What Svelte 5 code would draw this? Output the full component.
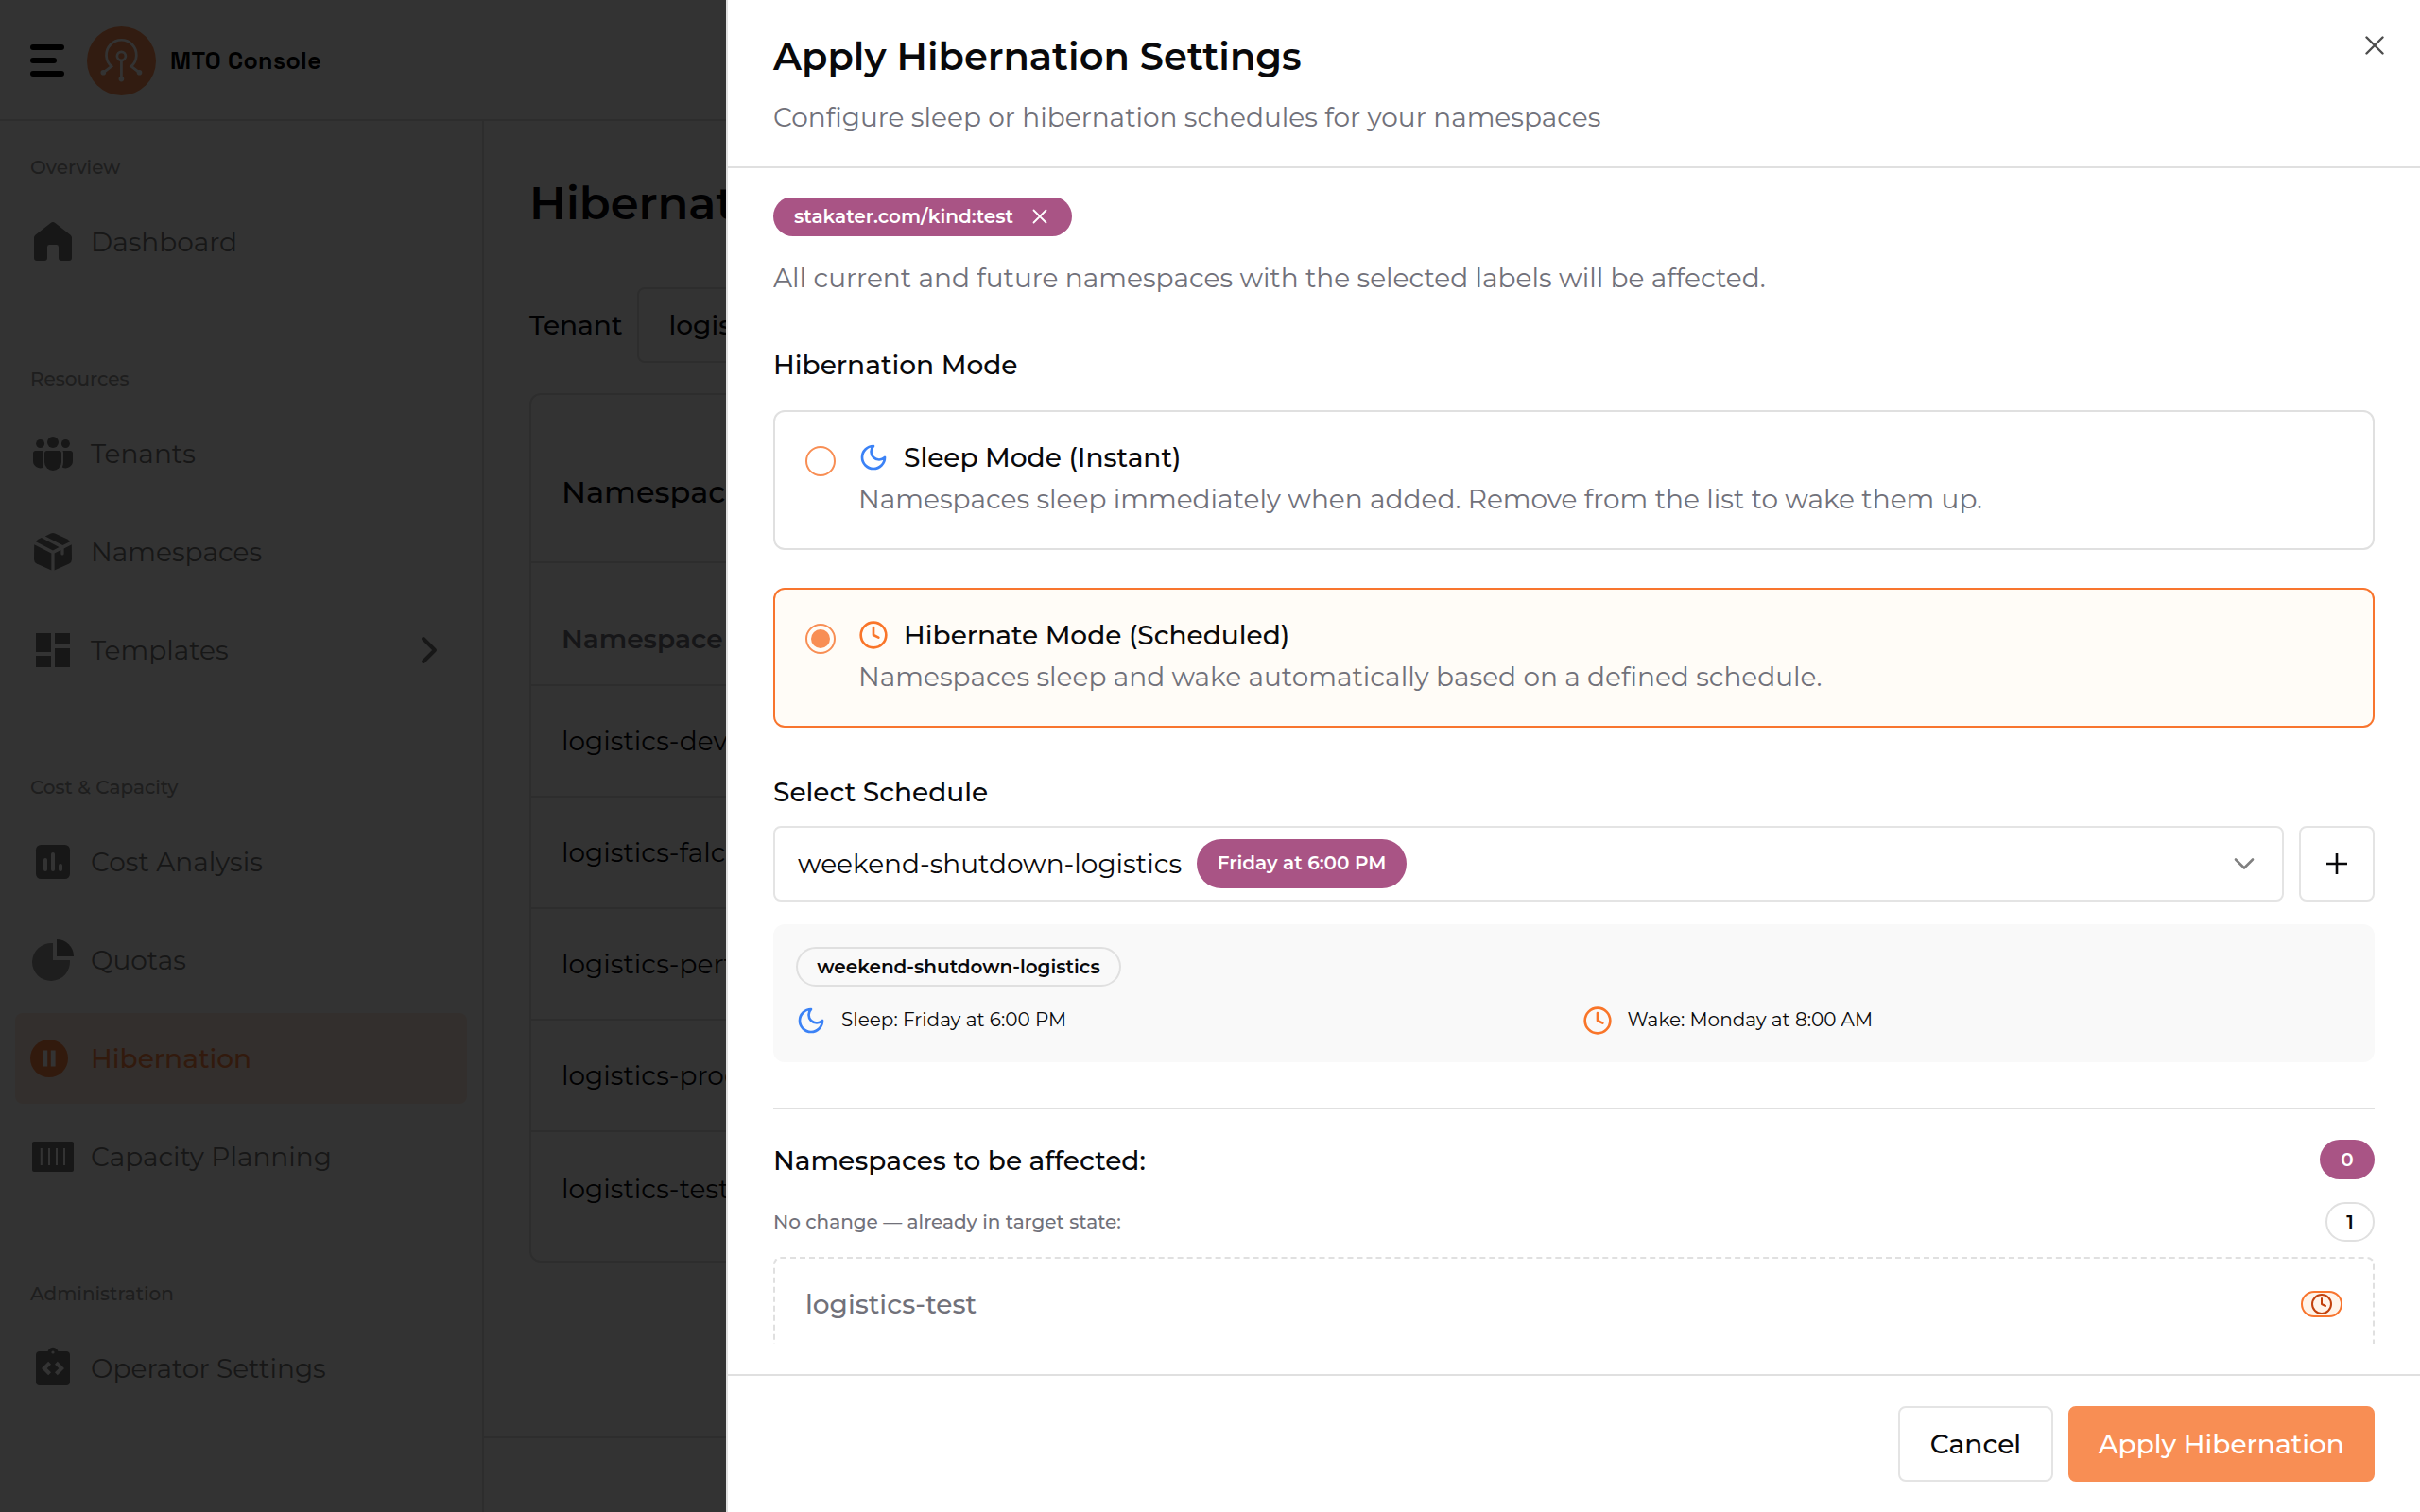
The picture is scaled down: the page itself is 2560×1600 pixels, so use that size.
<script lang="ts">
	type NavItem = { label: string; icon: string; active?: boolean; expandable?: boolean };

	const sections: { title: string; items: NavItem[] }[] = [
		{ title: 'Overview', items: [{ label: 'Dashboard', icon: 'home' }] },
		{
			title: 'Resources',
			items: [
				{ label: 'Tenants', icon: 'people' },
				{ label: 'Namespaces', icon: 'box' },
				{ label: 'Templates', icon: 'grid', expandable: true }
			]
		},
		{
			title: 'Cost & Capacity',
			items: [
				{ label: 'Cost Analysis', icon: 'chart' },
				{ label: 'Quotas', icon: 'pie' },
				{ label: 'Hibernation', icon: 'pause', active: true },
				{ label: 'Capacity Planning', icon: 'capacity' }
			]
		},
		{
			title: 'Administration',
			items: [{ label: 'Operator Settings', icon: 'operator' }]
		}
	];

	const namespaces = ['logistics-dev', 'logistics-falcon', 'logistics-perf', 'logistics-prod', 'logistics-test'];

	let mode = $state('hibernate');
</script>

{#snippet moon()}
	<svg class="mode-icon moon" viewBox="0 0 24 24">
		<path d="M12 3a6 6 0 0 0 9 9 9 9 0 1 1-9-9Z" />
	</svg>
{/snippet}

{#snippet clock()}
	<svg class="mode-icon clock" viewBox="0 0 24 24">
		<circle cx="12" cy="12" r="10" />
		<path d="M12 6v6l4 2" />
	</svg>
{/snippet}

<div class="app">
	<header class="topbar">
		<div class="hamburger"><i></i><i class="short"></i><i></i></div>
		<svg class="logo" viewBox="0 0 73 73">
			<circle cx="36.5" cy="36.5" r="36.5" fill="#f88e54" />
			<g fill="none" stroke="#fff" stroke-width="2.7">
				<path d="M17.3 48.8 26 42.2A15.9 15.9 0 1 1 46.8 42.2L55.5 48.8" />
				<circle cx="36.4" cy="31.3" r="4.5" />
				<path d="M36.4 35.8V55" />
			</g>
			<g fill="#fff">
				<circle cx="17.3" cy="48.8" r="2.8" />
				<circle cx="55.5" cy="48.8" r="2.8" />
				<circle cx="36.4" cy="55.6" r="2.8" />
			</g>
		</svg>
		<span class="brand">MTO Console</span>
	</header>

	<div class="body">
		<nav class="sidebar">
			{#each sections as section}
				<div class="section">
					<div class="section-title">{section.title}</div>
					{#each section.items as item}
						<div class="nav-item" class:active={item.active}>
							<span class="nav-icon">
								{#if item.icon === 'home'}
									<svg viewBox="0 0 24 24"><path d="M10.8 2a2 2 0 0 1 2.4 0l8 6.2c.5.4.8 1 .8 1.6v10.7a1.5 1.5 0 0 1-1.5 1.5h-4a1.5 1.5 0 0 1-1.5-1.5v-5.8a1.2 1.2 0 0 0-1.2-1.2h-3.6A1.2 1.2 0 0 0 9 14.7v5.8A1.5 1.5 0 0 1 7.5 22h-4A1.5 1.5 0 0 1 2 20.5V9.8c0-.6.3-1.2.8-1.6z" /></svg>
								{:else if item.icon === 'people'}
									<svg viewBox="0 0 24 24">
										<circle cx="12" cy="6" r="3" />
										<circle cx="5.3" cy="6.75" r="2.25" />
										<circle cx="18.7" cy="6.75" r="2.25" />
										<path d="M7.5 11.75c0-.7.55-1.25 1.25-1.25h6.5c.7 0 1.25.55 1.25 1.25v4.75a4.5 4.5 0 0 1-9 0z" />
										<path d="M6.8 10.5a2.2 2.2 0 0 0-.3 1.25v4.75c0 1 .2 1.9.6 2.7a3.75 3.75 0 0 1-5.6-3.3v-4.15c0-.7.55-1.25 1.25-1.25z" />
										<path d="M17.2 10.5a2.2 2.2 0 0 1 .3 1.25v4.75c0 1-.2 1.9-.6 2.7a3.75 3.75 0 0 0 5.6-3.3v-4.15c0-.7-.55-1.25-1.25-1.25z" />
									</svg>
								{:else if item.icon === 'box'}
									<svg viewBox="0 0 24 24">
										<path d="M2.1 8.1 11.2 12.7v9.1L3.4 18.2A2.5 2.5 0 0 1 2 16z" />
										<path d="M12.8 12.7 16.2 11v2a.8.8 0 0 0 1.6 0v-2.8l4.1-2.1.1 7.9a2.5 2.5 0 0 1-1.4 2.2l-7.8 3.6z" />
										<path d="M3 6.6q.5-.9 1.4-1.4l1.5-.7 9.4 5L12 11.2z" />
										<path d="m7.9 3.7 3-1.4a2.7 2.7 0 0 1 2.2 0l6.5 2.9q.9.5 1.4 1.4l-3.8 1.9z" />
									</svg>
								{:else if item.icon === 'grid'}
									<svg viewBox="0 0 24 24"><path d="M3 13h8V3H3v10zm0 8h8v-6H3v6zm10 0h8V11h-8v10zm0-18v6h8V3h-8z" /></svg>
								{:else if item.icon === 'chart'}
									<svg viewBox="0 0 24 24">
										<rect x="3" y="3" width="18" height="18" rx="2.6" />
										<g class="cut">
											<rect x="7" y="10" width="2" height="7" rx="1" />
											<rect x="11" y="7" width="2" height="10" rx="1" />
											<rect x="15" y="13" width="2" height="4" rx="1" />
										</g>
									</svg>
								{:else if item.icon === 'pie'}
									<svg viewBox="0 0 24 24">
										<path opacity="0.75" d="M12 3.05V12h8.95A10 10 0 1 1 12 3.05z" />
										<path d="M14 1a9 9 0 0 1 9 9h-9z" />
									</svg>
								{:else if item.icon === 'pause'}
									<svg class="pause" viewBox="0 0 20 20">
										<circle cx="10" cy="10" r="10" />
										<path class="cut" d="M6.7 5.8h2.4v8.4H6.7zM10.9 5.8h2.4v8.4h-2.4z" />
									</svg>
								{:else if item.icon === 'capacity'}
									<svg viewBox="0 0 24 24">
										<rect x="1" y="4" width="22" height="16" rx="1" />
										<path class="cut" d="M5.4 7.5h1v9h-1zM9.5 7.5h1v9h-1zM13.5 7.5h1v9h-1zM17.5 7.5h1v9h-1z" />
									</svg>
								{:else}
									<svg viewBox="0 0 24 24">
										<rect x="3" y="3" width="18" height="18" rx="2" />
										<circle cx="12" cy="3.7" r="2.8" />
										<g class="cut">
											<circle cx="12" cy="3.5" r="0.8" />
											<path d="M11 14.17l-1.41 1.42L6 12l3.59-3.59L11 9.83 8.83 12 11 14.17zm3.41 1.42L13 14.17 15.17 12 13 9.83l1.41-1.42L18 12l-3.59 3.59z" />
										</g>
									</svg>
								{/if}
							</span>
							<span class="nav-label">{item.label}</span>
							{#if item.expandable}
								<svg class="expand" viewBox="0 0 20 32"><path d="M3 4l12 12L3 28" /></svg>
							{/if}
						</div>
					{/each}
				</div>
			{/each}
		</nav>

		<main class="content">
			<div class="page">
				<h1>Hibernation</h1>
				<div class="tenant-row">
					<span class="tenant-label">Tenant</span>
					<div class="tenant-select">logistics</div>
				</div>
				<div class="table-card">
					<div class="table-title">Namespaces</div>
					<div class="table-head">Namespace</div>
					{#each namespaces as name}
						<div class="table-row">{name}</div>
					{/each}
				</div>
			</div>
			<div class="page-footer"></div>
		</main>
	</div>
</div>

<div class="overlay"></div>

<aside class="drawer">
	<div class="drawer-header">
		<div>
			<h2>Apply Hibernation Settings</h2>
			<p class="subtitle">Configure sleep or hibernation schedules for your namespaces</p>
		</div>
		<svg class="close" viewBox="0 0 20 20"><path d="M1.5 1.5l17 17M18.5 1.5l-17 17" /></svg>
	</div>

	<div class="drawer-body">
		<div class="badge chip">
			<span>stakater.com/kind:test</span>
			<svg viewBox="0 0 16 16"><path d="M1.5 1.5l13 13M14.5 1.5l-13 13" /></svg>
		</div>
		<p class="hint">All current and future namespaces with the selected labels will be affected.</p>

		<h3 class="mode-heading">Hibernation Mode</h3>
		<div class="mode-card" class:selected={mode === 'sleep'}>
			<span class="radio"></span>
			<div class="mode-text">
				<div class="mode-title">{@render moon()}<span>Sleep Mode (Instant)</span></div>
				<p>Namespaces sleep immediately when added. Remove from the list to wake them up.</p>
			</div>
		</div>
		<div class="mode-card second" class:selected={mode === 'hibernate'}>
			<span class="radio"></span>
			<div class="mode-text">
				<div class="mode-title">{@render clock()}<span>Hibernate Mode (Scheduled)</span></div>
				<p>Namespaces sleep and wake automatically based on a defined schedule.</p>
			</div>
		</div>

		<h3 class="schedule-heading">Select Schedule</h3>
		<div class="schedule-row">
			<div class="select">
				<span>weekend-shutdown-logistics</span>
				<span class="badge tall">Friday at 6:00 PM</span>
				<svg class="caret" viewBox="0 0 24 14"><path d="M3 2.5l9 9 9-9" /></svg>
			</div>
			<button class="add" aria-label="Add schedule">
				<svg viewBox="0 0 24 24"><path d="M12 1v22M1 12h22" /></svg>
			</button>
		</div>

		<div class="summary">
			<span class="badge outline">weekend-shutdown-logistics</span>
			<div class="times">
				<div class="time">{@render moon()}<span>Sleep: Friday at 6:00 PM</span></div>
				<div class="time">{@render clock()}<span>Wake: Monday at 8:00 AM</span></div>
			</div>
		</div>

		<div class="divider"></div>

		<div class="count-row first">
			<h3>Namespaces to be affected:</h3>
			<span class="badge zero">0</span>
		</div>
		<div class="count-row">
			<span class="no-change">No change — already in target state:</span>
			<span class="badge outline one">1</span>
		</div>
		<div class="target">
			<span>logistics-test</span>
			<span class="clock-pill">{@render clock()}</span>
		</div>
	</div>

	<div class="drawer-footer">
		<button class="btn cancel">Cancel</button>
		<button class="btn primary">Apply Hibernation</button>
	</div>
</aside>

<style>
	:global(body) {
		margin: 0;
		background: #fff;
		overflow: hidden;
	}

	.app,
	.drawer,
	button {
		font-family: Montserrat, Inter, 'Open Sans', sans-serif;
	}

	.app *,
	.drawer,
	.drawer * {
		box-sizing: border-box;
	}

	h1,
	h2,
	h3,
	p {
		margin: 0;
	}

	.app {
		display: flex;
		flex-direction: column;
		width: 2560px;
		height: 1600px;
		font-size: 28px;
		color: #09090b;
	}

	.topbar {
		display: flex;
		align-items: center;
		height: 128px;
		padding: 2px 0 0 32px;
		border-bottom: 2px solid #dedede;
	}

	.hamburger {
		display: flex;
		flex-direction: column;
		gap: 8px;
		width: 36px;
		margin-right: 24px;
	}

	.hamburger i {
		height: 6px;
		border-radius: 3px;
		background: #000;
	}

	.hamburger .short {
		width: 28px;
	}

	.logo {
		width: 73px;
		height: 73px;
		margin-right: 15px;
	}

	.brand {
		font-family: 'Space Grotesk', Inter, sans-serif;
		font-size: 25px;
		font-weight: 700;
		letter-spacing: 0.4px;
		color: #000;
	}

	.body {
		display: flex;
		flex: 1;
		min-height: 0;
	}

	.sidebar {
		width: 512px;
		padding: 18px 16px 0;
		border-right: 2px solid #dedede;
	}

	.section {
		margin-bottom: 66px;
	}

	.section-title {
		height: 62px;
		padding-left: 16px;
		line-height: 62px;
		font-size: 20px;
		font-weight: 500;
		color: #949494;
	}

	.nav-item {
		display: flex;
		align-items: center;
		height: 96px;
		margin-bottom: 8px;
		padding: 0 16px;
		border-radius: 8px;
		color: #737373;
	}

	.nav-item:last-child {
		margin-bottom: 0;
	}

	.nav-item.active {
		background: #ffeadf;
		color: #f88144;
		font-weight: 500;
	}

	.nav-icon {
		display: flex;
		width: 64px;
	}

	.nav-icon svg {
		width: 48px;
		height: 48px;
		fill: currentColor;
	}

	.nav-icon svg.pause {
		width: 40px;
		height: 40px;
	}

	.nav-icon .cut {
		fill: #fff;
	}

	.nav-label {
		flex: 1;
	}

	.expand {
		width: 20px;
		height: 32px;
		margin-right: 13px;
		fill: none;
		stroke: #737373;
		stroke-width: 4;
		stroke-linecap: round;
		stroke-linejoin: round;
	}

	.content {
		display: flex;
		flex: 1;
		flex-direction: column;
	}

	.page {
		flex: 1;
		padding: 56px 48px 0;
	}

	h1 {
		height: 62px;
		margin-bottom: 58px;
		line-height: 62px;
		font-size: 48px;
		font-weight: 600;
	}

	.tenant-row {
		display: flex;
		align-items: center;
		gap: 15px;
		margin-bottom: 32px;
	}

	.tenant-label,
	.tenant-select {
		font-weight: 500;
	}

	.tenant-select {
		width: 400px;
		height: 80px;
		padding-left: 32px;
		border: 2px solid #dedede;
		border-radius: 8px;
		line-height: 76px;
	}

	.table-card {
		height: 920px;
		border: 2px solid #dedede;
		border-radius: 12px;
	}

	.table-title,
	.table-head,
	.table-row {
		display: flex;
		align-items: center;
		padding-left: 32px;
		border-bottom: 2px solid #dedede;
	}

	.table-title {
		height: 178px;
		padding-top: 28px;
		font-size: 32px;
		font-weight: 500;
	}

	.table-head {
		height: 130px;
		padding-top: 31px;
		font-weight: 600;
		color: #71717a;
	}

	.table-row {
		height: 118px;
	}

	.table-row:last-child {
		height: 119px;
		border-bottom: 0;
	}

	.page-footer {
		height: 80px;
		border-top: 2px solid #dedede;
	}

	.overlay {
		position: fixed;
		inset: 0;
		background: rgba(0, 0, 0, 0.8);
	}

	.drawer {
		position: fixed;
		top: 0;
		right: 0;
		display: flex;
		flex-direction: column;
		width: 1792px;
		height: 1600px;
		border-left: 2px solid #e0e0e0;
		background: #fff;
		font-size: 28px;
		color: #09090b;
	}

	.drawer-header {
		display: flex;
		justify-content: space-between;
		height: 178px;
		padding: 32px 38px 0 48px;
		border-bottom: 2px solid #e0e0e0;
	}

	h2 {
		height: 56px;
		margin-bottom: 16px;
		line-height: 55px;
		font-size: 40px;
		font-weight: 600;
	}

	.subtitle {
		height: 40px;
		line-height: 40px;
		color: #71717a;
	}

	.close {
		width: 20px;
		height: 20px;
		margin-top: 6px;
		fill: none;
		stroke: #4d4d4d;
		stroke-width: 2.4;
		stroke-linecap: round;
	}

	.drawer-body {
		height: 1212px;
		margin: 32px 48px;
		overflow: hidden;
	}

	.badge {
		display: inline-flex;
		align-items: center;
		justify-content: center;
		height: 42px;
		border-radius: 26px;
		background: #a95485;
		color: #fff;
		font-size: 20px;
		font-weight: 600;
	}

	.badge.outline {
		border: 2px solid #e0e0e0;
		background: transparent;
		color: #09090b;
	}

	.badge.tall {
		width: 222px;
		height: 52px;
		padding-bottom: 2px;
	}

	.chip {
		display: flex;
		justify-content: flex-start;
		gap: 20px;
		width: 316px;
		margin-top: -2px;
		padding-left: 22px;
	}

	.chip svg {
		width: 16px;
		height: 16px;
		fill: none;
		stroke: #fff;
		stroke-width: 1.8;
		stroke-linecap: round;
	}

	.hint {
		height: 40px;
		margin-top: 24px;
		line-height: 40px;
		color: #71717a;
	}

	h3 {
		height: 40px;
		line-height: 40px;
		font-size: 28px;
		font-weight: 500;
	}

	.mode-heading {
		margin-top: 52px;
	}

	.mode-card {
		display: flex;
		height: 148px;
		margin-top: 28px;
		padding: 28px 32px;
		border: 2px solid #e0e0e0;
		border-radius: 12px;
	}

	.mode-card.second {
		margin-top: 40px;
	}

	.mode-card.selected {
		border-color: #f8752e;
		background: #fffcf7;
	}

	.radio {
		display: flex;
		align-items: center;
		justify-content: center;
		width: 32px;
		height: 32px;
		margin: 8px 24px 0 0;
		border: 2px solid #f88e54;
		border-radius: 50%;
	}

	.selected .radio::after {
		content: '';
		width: 20px;
		height: 20px;
		border-radius: 50%;
		background: #f88e54;
	}

	.mode-title {
		display: flex;
		align-items: center;
		gap: 16px;
		height: 40px;
		font-weight: 500;
	}

	.mode-text p {
		height: 40px;
		margin-top: 4px;
		line-height: 40px;
		color: #71717a;
	}

	.mode-icon {
		width: 32px;
		height: 32px;
		fill: none;
		stroke-width: 2;
		stroke-linecap: round;
		stroke-linejoin: round;
	}

	.moon {
		stroke: #3b82f6;
	}

	.clock {
		stroke: #f97529;
	}

	.schedule-heading {
		margin-top: 48px;
	}

	.schedule-row {
		display: flex;
		gap: 16px;
		margin-top: 16px;
	}

	.select {
		display: flex;
		align-items: center;
		gap: 16px;
		width: 1598px;
		height: 80px;
		padding: 0 28px 0 24px;
		border: 2px solid #e4e4e4;
		border-radius: 8px;
	}

	.caret {
		width: 24px;
		height: 14px;
		margin-left: auto;
		fill: none;
		stroke: #808080;
		stroke-width: 2.6;
		stroke-linecap: round;
		stroke-linejoin: round;
	}

	.add {
		display: flex;
		align-items: center;
		justify-content: center;
		width: 80px;
		height: 80px;
		padding: 0;
		border: 2px solid #e4e4e4;
		border-radius: 8px;
		background: #fff;
	}

	.add svg {
		width: 24px;
		height: 24px;
		stroke: #09090b;
		stroke-width: 2.6;
	}

	.summary {
		height: 146px;
		margin-top: 24px;
		padding: 24px;
		border-radius: 12px;
		background: #f9f9f9;
	}

	.summary .badge {
		display: flex;
		width: 344px;
	}

	.times {
		display: grid;
		grid-template-columns: 1fr 1fr;
		gap: 17px;
		margin-top: 20px;
	}

	.time {
		display: flex;
		align-items: center;
		gap: 16px;
		height: 32px;
		font-size: 20px;
	}

	.time span {
		padding-bottom: 2px;
	}

	.divider {
		height: 2px;
		margin: 48px 0 32px;
		background: #e0e0e0;
	}

	.count-row {
		display: flex;
		align-items: center;
		justify-content: space-between;
		height: 42px;
		margin-top: 24px;
	}

	.count-row.first {
		margin-top: 0;
	}

	.count-row h3 {
		line-height: 42px;
	}

	.zero {
		width: 58px;
	}

	.one {
		width: 52px;
	}

	.no-change {
		font-size: 20px;
		font-weight: 500;
		color: #71717a;
	}

	.target {
		display: flex;
		align-items: center;
		justify-content: space-between;
		height: 100px;
		margin-top: 16px;
		padding: 0 32px;
		border: 2px dashed #e0e0e0;
		border-radius: 8px;
		color: #71717a;
		font-weight: 500;
	}

	.clock-pill {
		display: flex;
		align-items: center;
		justify-content: center;
		width: 44px;
		height: 28px;
		border: 2px solid #f8752e;
		border-radius: 14px;
		background: #fff4ea;
	}

	.clock-pill .clock {
		width: 24px;
		height: 24px;
		stroke: #c2410c;
	}

	.drawer-footer {
		display: flex;
		justify-content: flex-end;
		gap: 16px;
		height: 146px;
		padding: 32px 48px;
		border-top: 2px solid #e0e0e0;
	}

	.btn {
		height: 80px;
		padding: 0;
		border: 2px solid #e4e4e4;
		border-radius: 8px;
		background: #fff;
		color: #09090b;
		font-size: 28px;
		font-weight: 500;
	}

	.cancel {
		width: 164px;
	}

	.primary {
		width: 324px;
		border-color: #f88e54;
		background: #f88e54;
		color: #fff;
	}
</style>
